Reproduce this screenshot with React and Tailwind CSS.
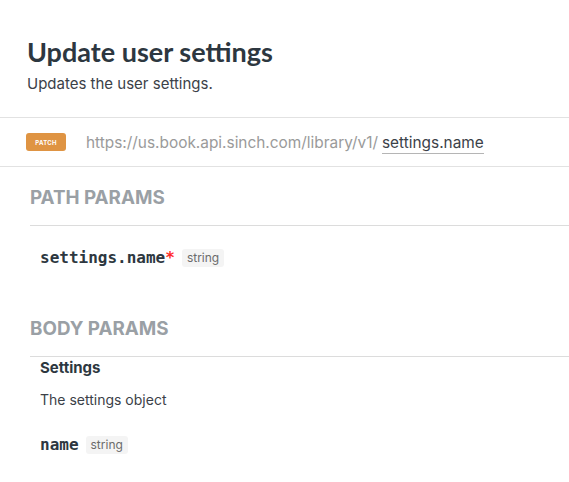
import React from 'react';

const TypeTag = ({ children }) => (
  <span className="ml-[7px] rounded-[3px] bg-[#f4f4f4] px-[5px] py-[2px] text-[12px] leading-[14px] text-[#6b6b6b] font-['Inter',sans-serif]">
    {children}
  </span>
);

const App = () => {
  return (
    <div className="h-[482px] w-[569px] bg-white font-['Inter',sans-serif] text-[#2d3740]">
      {/* Header */}
      <div className="px-[27px] pt-[35px] pb-[23px]">
        <h1 className="font-['Lato',sans-serif] text-[27px] font-bold leading-[34px]">Update user settings</h1>
        <p className="mt-[5px] text-[15px] leading-[20px] text-[#3b4148]">Updates the user settings.</p>
      </div>

      {/* Endpoint */}
      <div className="flex h-[50px] items-center border-y border-[#e2e2e2] px-[26px]">
        <span className="flex h-[18px] w-[40px] items-center justify-center rounded-[3px] bg-[#df9443] text-[6px] font-bold tracking-[0.3px] text-white">
          PATCH
        </span>
        <span className="ml-[20px] mt-[2px] text-[15.4px] text-[#9a9a9a]">https://us.book.api.sinch.com/library/v1/</span>
        <span className="ml-[4px] mt-[2px] border-b border-[#b5b5b5] text-[15.4px] leading-[20px] text-[#3b4148]">settings.name</span>
      </div>

      {/* Path params */}
      <div className="pl-[30px]">
        <h2 className="pt-[20px] text-[18.8px] font-bold leading-[22px] text-[#9aa0a5]">PATH PARAMS</h2>
        <div className="mt-[16px] border-t border-[#dcdcdc]" />
        <div className="flex items-center pl-[10px] pt-[20px]">
          <span className="font-['DejaVu_Sans_Mono',monospace] text-[16px] font-bold text-[#2d3740]">settings.name</span>
          <span className="font-['DejaVu_Sans_Mono',monospace] text-[16px] font-bold text-[#ff2b2b]">*</span>
          <TypeTag>string</TypeTag>
        </div>

        {/* Body params */}
        <h2 className="pt-[48px] text-[18.8px] font-bold leading-[22px] text-[#9aa0a5]">BODY PARAMS</h2>
        <div className="mt-[16px] border-t border-[#dcdcdc]" />
        <div className="pl-[10px]">
          <div className="pt-[1px] text-[15px] font-bold leading-[20px]">Settings</div>
          <div className="mt-[12px] text-[14px] leading-[20px] text-[#3b4148]">The settings object</div>
          <div className="mt-[23px] flex items-center">
            <span className="font-['DejaVu_Sans_Mono',monospace] text-[16px] font-bold text-[#2d3740]">name</span>
            <TypeTag>string</TypeTag>
          </div>
        </div>
      </div>
    </div>
  );
};

export default App;
